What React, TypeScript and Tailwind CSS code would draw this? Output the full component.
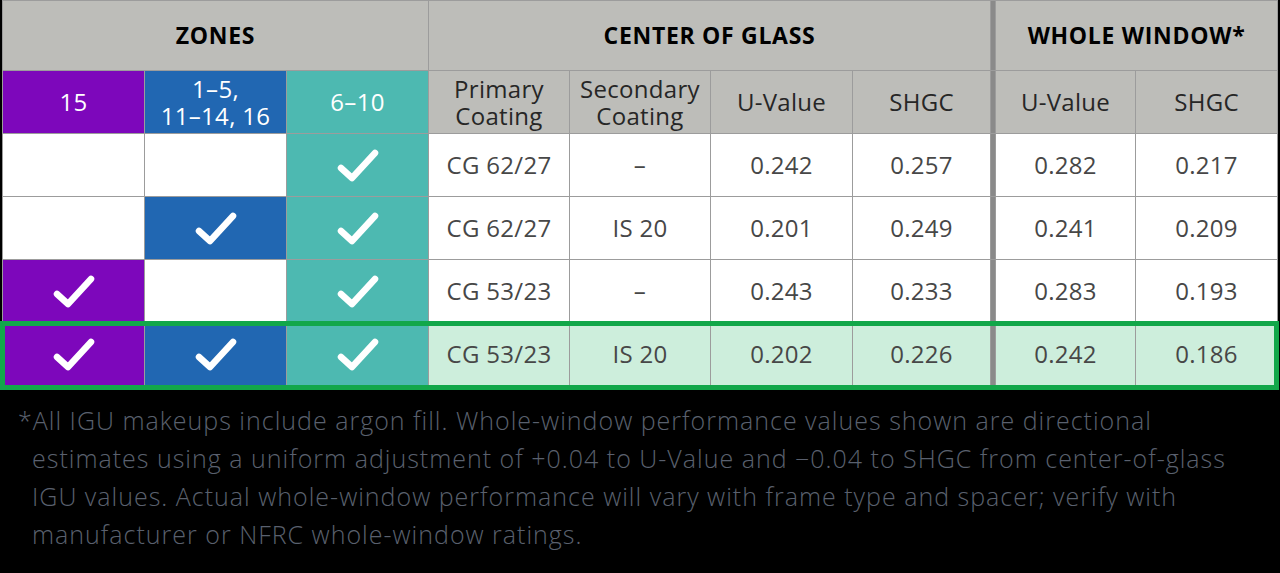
const COLS =
  "grid grid-cols-[141px_141px_141px_140px_140px_141px_137px_4px_139px_141px] gap-x-px";

type Row = {
  zones: [boolean, boolean, boolean];
  primary: string;
  secondary: string;
  u: string;
  shgc: string;
  wu: string;
  wshgc: string;
  highlight?: boolean;
};

const rows: Row[] = [
  { zones: [false, false, true], primary: "CG 62/27", secondary: "–", u: "0.242", shgc: "0.257", wu: "0.282", wshgc: "0.217" },
  { zones: [false, true, true], primary: "CG 62/27", secondary: "IS 20", u: "0.201", shgc: "0.249", wu: "0.241", wshgc: "0.209" },
  { zones: [true, false, true], primary: "CG 53/23", secondary: "–", u: "0.243", shgc: "0.233", wu: "0.283", wshgc: "0.193" },
  { zones: [true, true, true], primary: "CG 53/23", secondary: "IS 20", u: "0.202", shgc: "0.226", wu: "0.242", wshgc: "0.186", highlight: true },
];

const zoneBg = ["bg-[#7d07bb]", "bg-[#2167b2]", "bg-[#4db9b1]"];

function Check() {
  return (
    <svg width="44" height="35" viewBox="0 0 44 35" fill="none">
      <polyline
        points="5,20 16,30 39,5"
        stroke="white"
        strokeWidth="6.5"
        strokeLinecap="round"
        strokeLinejoin="round"
      />
    </svg>
  );
}

function Cell({ children, className = "" }: { children?: React.ReactNode; className?: string }) {
  return (
    <div className={`flex items-center justify-center text-center ${className}`}>{children}</div>
  );
}

// two-line header label
function Two({ a, b }: { a: string; b: string }) {
  return (
    <div className="flex flex-col leading-[27px]">
      <span>{a}</span>
      <span>{b}</span>
    </div>
  );
}

export default function App() {
  return (
    <div className="min-h-[573px] w-full bg-black font-['Open_Sans',sans-serif]">
      <div className="ml-[2px] flex w-[1276px] flex-col gap-y-px bg-[#9c9c9c] p-px">
        {/* group headers */}
        <div className={`${COLS} h-[69px] text-[23px] font-bold tracking-[0.7px] text-black`}>
          <Cell className="col-span-3 bg-[#bdbdb9]">ZONES</Cell>
          <Cell className="col-span-4 bg-[#bdbdb9]">CENTER OF GLASS</Cell>
          <div className="bg-[#8a8a8a]" />
          <Cell className="col-span-2 bg-[#bdbdb9]">WHOLE WINDOW*</Cell>
        </div>

        {/* column headers */}
        <div className={`${COLS} h-[62px] text-[24px] tracking-[0.3px]`}>
          <Cell className={`${zoneBg[0]} text-white`}>15</Cell>
          <Cell className={`${zoneBg[1]} text-white`}>
            <Two a="1–5," b="11–14, 16" />
          </Cell>
          <Cell className={`${zoneBg[2]} text-white`}>6–10</Cell>
          <Cell className="bg-[#bdbdb9] text-[#262626]">
            <Two a="Primary" b="Coating" />
          </Cell>
          <Cell className="bg-[#bdbdb9] text-[#262626]">
            <Two a="Secondary" b="Coating" />
          </Cell>
          <Cell className="bg-[#bdbdb9] text-[#262626]">U-Value</Cell>
          <Cell className="bg-[#bdbdb9] text-[#262626]">SHGC</Cell>
          <div className="bg-[#8a8a8a]" />
          <Cell className="bg-[#bdbdb9] text-[#262626]">U-Value</Cell>
          <Cell className="bg-[#bdbdb9] text-[#262626]">SHGC</Cell>
        </div>

        {rows.map((r, i) => {
          const bg = r.highlight ? "bg-[#cdeedc]" : "bg-white";
          return (
            <div key={i} className={`${COLS} relative h-[62px] text-[24px] tracking-[0.3px] text-[#474747]`}>
              {r.zones.map((on, z) => (
                <Cell key={z} className={on ? zoneBg[z] : "bg-white"}>
                  {on && <Check />}
                </Cell>
              ))}
              <Cell className={bg}>{r.primary}</Cell>
              <Cell className={bg}>{r.secondary}</Cell>
              <Cell className={bg}>{r.u}</Cell>
              <Cell className={bg}>{r.shgc}</Cell>
              <div className="bg-[#8a8a8a]" />
              <Cell className={bg}>{r.wu}</Cell>
              <Cell className={bg}>{r.wshgc}</Cell>
              {r.highlight && (
                <div className="pointer-events-none absolute -top-[2px] -bottom-[5px] -left-[3px] -right-[2px] border-[5px] border-[#12a74a]" />
              )}
            </div>
          );
        })}
      </div>

      <p className="mt-[15px] pr-4 pl-[32px] -indent-[14px] text-[25px] leading-[38px] font-light tracking-[1px] text-[#5a606e]">
        *All IGU makeups include argon fill. Whole-window performance values shown are directional
        estimates using a uniform adjustment of +0.04 to U-Value and −0.04 to SHGC from center-of-glass
        IGU values. Actual whole-window performance will vary with frame type and spacer; verify with
        manufacturer or NFRC whole-window ratings.
      </p>
    </div>
  );
}
